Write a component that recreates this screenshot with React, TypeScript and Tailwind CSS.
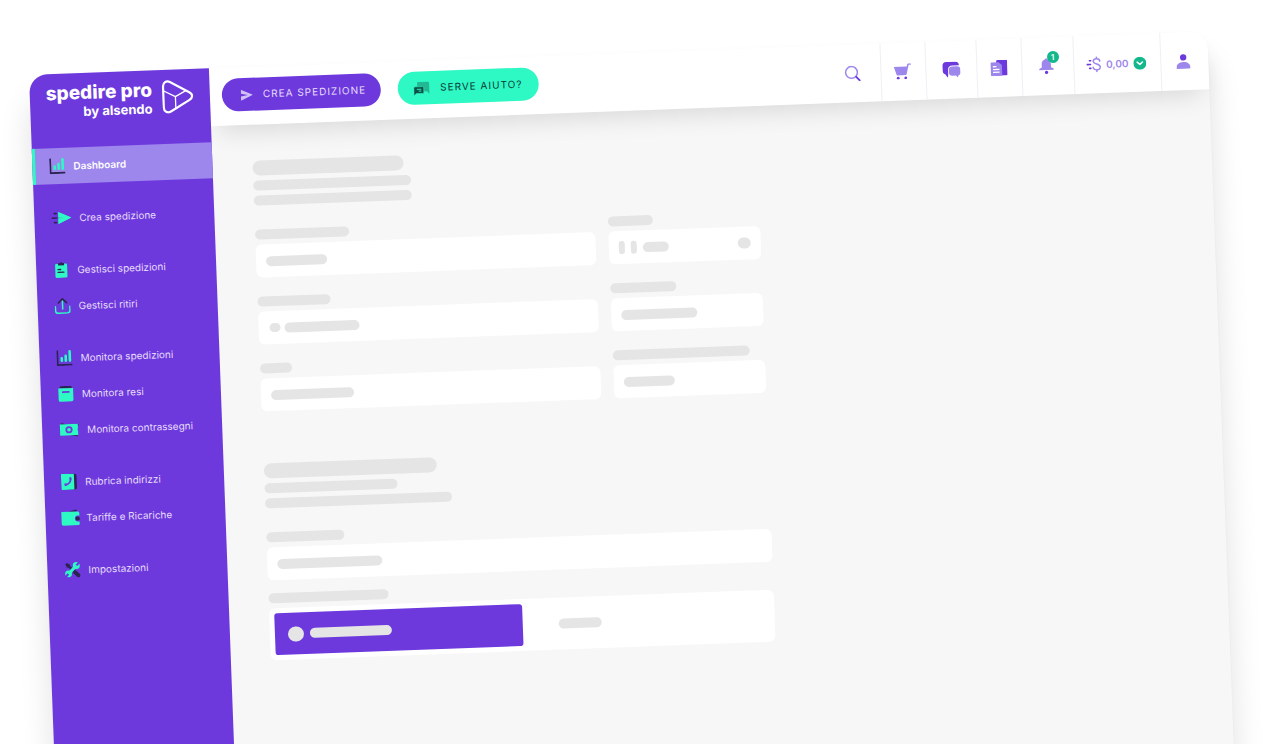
import type { ReactNode } from 'react';
import clsx from 'clsx';

const TEAL = '#2ef8c4';
const DARK = '#2b2350';
const PURPLE = '#6d39dd';
const LILAC = '#9d86ec';

function ChartIcon() {
  return (
    <svg width="16" height="16" viewBox="0 0 16 16" fill="none">
      <path d="M.9.3V15h14.800" stroke={DARK} strokeWidth="1.800" />
      <path d="M5.200 8.400v2.400M9.200 6v4.800M13.300 1.500v9.300" stroke={TEAL} strokeWidth="2.600" strokeLinecap="round" />
    </svg>
  );
}

function SendIcon() {
  return (
    <svg width="20" height="14" viewBox="0 0 20 14">
      <path d="M7 1l13 6-13 6V8.2L13 7 7 5.8z" fill={TEAL} />
      <path d="M7 1l13 6-13 6z" fill={TEAL} opacity=".85" />
      <path d="M3 2.5h2M.8 7h4.500M3 11.5h2" stroke={DARK} strokeWidth="1.6" strokeLinecap="round" />
    </svg>
  );
}

function ClipboardIcon() {
  return (
    <svg width="16" height="16" viewBox="0 0 16 16">
      <rect x="2" y="1.8" width="12" height="14" rx="1.2" fill={TEAL} />
      <path d="M5 1.2h1.6a1.5 1.5 0 012.8 0H11v2.3H5z" fill={DARK} />
      <path d="M4.800 7.600h2.600M4.800 10.300h5.800" stroke={DARK} strokeWidth="1.4" strokeLinecap="round" />
    </svg>
  );
}

function UploadIcon() {
  return (
    <svg width="16" height="16" viewBox="0 0 16 16" fill="none" strokeLinecap="round" strokeLinejoin="round">
      <path d="M.8 8.5v4.200A2.500 2.500 0 003.300 15.200h9.400a2.500 2.500 0 002.500-2.500V8.500" stroke={TEAL} strokeWidth="1.5" />
      <path d="M8 3v8" stroke={TEAL} strokeWidth="1.5" />
      <path d="M3.900 4.900L8 .9l4.100 4" stroke={DARK} strokeWidth="1.6" />
    </svg>
  );
}

function BoxIcon() {
  return (
    <svg width="16" height="16" viewBox="0 0 16 16">
      <path d="M2.600.2h10.800l1 2H1.600z" fill={DARK} />
      <path d="M.6 2.400h14.800v11.400c0 1.200-.8 2-2 2H2.600c-1.200 0-2-.8-2-2z" fill={TEAL} />
      <path d="M5 6.200h6" stroke={PURPLE} strokeWidth="1.8" strokeLinecap="round" />
    </svg>
  );
}

function CashIcon() {
  return (
    <svg width="20" height="14" viewBox="0 0 20 14">
      <path d="M2 0l7 2H1.600zM16.500.8l3.100 1-.9 3zM9 12h9.600l-.6 2z" fill={DARK} />
      <rect x=".8" y="1.400" width="18" height="11.200" fill={TEAL} />
      <circle cx="9.800" cy="7" r="2.700" fill="none" stroke={PURPLE} strokeWidth="1.800" />
      <path d="M.8 5.400a3 3 0 000 3.200zM18.800 5.400a3 3 0 000 3.200z" fill={PURPLE} />
    </svg>
  );
}

function PhoneBookIcon() {
  return (
    <svg width="16" height="16" viewBox="0 0 16 16">
      <rect x="6" y="0" width="9.600" height="16" rx="2" fill={DARK} />
      <rect x="0" y="0" width="13" height="16" rx="1" fill={TEAL} />
      <path d="M9.400 4.800c.6 3-1.800 6-5.600 6.200" fill="none" stroke={PURPLE} strokeWidth="1.700" />
      <path d="M8.200 3.800l2-.4.4 2.600-1.800.4zM3 9.900l2.300-.6.6 2-2.300.9z" fill={PURPLE} />
    </svg>
  );
}

function WalletIcon() {
  return (
    <svg width="16" height="16" viewBox="0 0 16 16" className="overflow-visible">
      <path d="M6.500 1.600L14 0l1 2H6.500z" fill={DARK} />
      <path d="M-.5 2h15.800c.9 0 1.700.7 1.700 1.600V6h-1.600a3 3 0 000 6H17v2.200c0 .8-.6 1.400-1.400 1.400H.8C-.2 15.600-1 15-1 14V2.500c0-.3.200-.5.5-.5z" fill={TEAL} />
      <circle cx="15.200" cy="9" r="2.100" fill={DARK} />
    </svg>
  );
}

function ToolsIcon() {
  return (
    <svg width="16" height="16" viewBox="0 0 16 16" fill="none">
      <path d="M1 2.600L2.600 1l3 1.600.3 1.700 3.500 3.500-1.600 1.600-3.500-3.500-1.700-.3z" fill={DARK} />
      <path d="M10.500 10.500l3.300 3.300" stroke={DARK} strokeWidth="4" strokeLinecap="round" />
      <path d="M4 12l7.600-7.600" stroke={TEAL} strokeWidth="3" />
      <circle cx="12" cy="4" r="3.500" fill={TEAL} />
      <circle cx="4" cy="12" r="3.400" fill={TEAL} />
      <path d="M12.200 3.800L15.600.4M3.800 12.200L.4 15.600" stroke={PURPLE} strokeWidth="2.200" />
    </svg>
  );
}

function LogoMark() {
  return (
    <svg width="32" height="34" viewBox="0 0 32 34" fill="none" stroke="#fff" strokeLinejoin="round" strokeLinecap="round">
      <path
        d="M1.500 6.500v21c0 4 3.600 6.200 7 4.300l19-11c3.600-2.100 3.600-5.500 0-7.600l-19-11C5.100.3 1.500 2.500 1.500 6.500z"
        strokeWidth="2.200"
      />
      <path d="M2 11l11.500 6L24 11.500M13.500 17v12" strokeWidth="1.300" />
    </svg>
  );
}

function DartIcon() {
  return (
    <svg width="12" height="12" viewBox="0 0 12 12">
      <path d="M0 .5L12 6 0 11.500V7.300L7 6 0 4.700z" fill="#cfc0f7" />
    </svg>
  );
}

function HelpChatIcon() {
  return (
    <svg width="16" height="14" viewBox="0 0 16 14">
      <path d="M4.500.5h10a1 1 0 011 1v11L13 10H4.500a1 1 0 01-1-1V1.500a1 1 0 011-1z" fill="#23b894" />
      <path d="M1.200 5.200h7.600A1.200 1.200 0 0110 6.400v4.400A1.200 1.200 0 018.800 12H2.500L0 14V6.400a1.200 1.200 0 011.200-1.200z" fill="#104e47" stroke={TEAL} strokeWidth=".6" />
      <path d="M3 7.800h4.500M4.800 9.600h2.700" stroke={TEAL} strokeWidth=".9" />
    </svg>
  );
}

function SearchIcon() {
  return (
    <svg width="16" height="16" viewBox="0 0 16 16" fill="none" strokeLinecap="round">
      <circle cx="7" cy="7" r="5.900" stroke={LILAC} strokeWidth="1.500" />
      <path d="M11.600 11.600l3.400 3.600" stroke={PURPLE} strokeWidth="1.900" />
    </svg>
  );
}

function CartIcon() {
  return (
    <svg width="18" height="16" viewBox="0 0 18 16">
      <path d="M.5 3.200h12.900L14 .9C14.200.3 14.500 0 15 0h2.600v1.500h-2.200L13 10.900c-.1.500-.5.800-1 .8H4c-.5 0-.9-.3-1-.8z" fill={LILAC} />
      <circle cx="4.500" cy="14.500" r="1.400" fill={PURPLE} />
      <circle cx="12" cy="14.500" r="1.400" fill={PURPLE} />
    </svg>
  );
}

function ChatIcon() {
  return (
    <svg width="18" height="16" viewBox="0 0 18 16">
      <path d="M4 0h8.500C15 0 16.600 1.200 16.600 3.800H10C7.200 3.800 5.600 5.200 5.600 8v4.800L5.200 16l-2.400-3.400C1 11.800 0 10.400 0 8.500V4C0 1.500 1.500 0 4 0z" fill={PURPLE} />
      <path d="M9.600 4.800h5C16.600 4.800 18 6 18 8v2.800c0 1.700-.9 2.800-2.300 3.100L15.300 16l-2-2H9.600c-2 0-3.200-1.200-3.200-3V8c0-2 1.200-3.200 3.200-3.200z" fill={LILAC} />
    </svg>
  );
}

function NewsIcon() {
  return (
    <svg width="17" height="16" viewBox="0 0 17 16">
      <rect x="6" y="0" width="11" height="15.600" rx="1.200" fill={PURPLE} />
      <path d="M1.400 2.200h6.800l3.400 3V14.800c0 .7-.5 1.200-1.200 1.200h-9C.7 16 .2 15.500.2 14.800V3.400c0-.7.5-1.200 1.200-1.200z" fill={LILAC} />
      <path d="M3 6.600h2.600M3 9.400h5.600M3 12.200h5.600" stroke="#fff" strokeWidth="1.300" strokeLinecap="round" />
    </svg>
  );
}

function BellIcon() {
  return (
    <svg width="16" height="16" viewBox="0 0 16 16">
      <path d="M8 0c.8 0 1.400.6 1.400 1.300 2.100.6 3.200 2.400 3.200 4.500v3.400l2.600 1.300v1.300H.8v-1.300l2.600-1.300V5.800c0-2.100 1.100-3.900 3.200-4.500C6.600.6 7.200 0 8 0z" fill={LILAC} />
      <circle cx="8" cy="14.200" r="1.700" fill={PURPLE} />
    </svg>
  );
}

function DollarIcon() {
  return (
    <svg width="15" height="16" viewBox="0 0 15 16" fill="none" strokeLinecap="round">
      <path d="M13.500 5c0-1.700-1.300-2.600-3.200-2.600S7 3.400 7 4.900c0 3.700 6.800 1.900 6.800 5.800 0 1.700-1.500 2.800-3.500 2.800s-3.600-1-3.600-2.800M10.300.7v1.700M10.300 13.500v1.800" stroke={LILAC} strokeWidth="1.500" />
      <path d="M3.200 4.200h1.200M.8 8h3.400M3.200 11.800h1.200" stroke={PURPLE} strokeWidth="1.600" />
    </svg>
  );
}

function CheckCircleIcon() {
  return (
    <svg width="13" height="13" viewBox="0 0 12 12">
      <circle cx="6" cy="6" r="6" fill="#12b88c" />
      <path d="M3.600 5L6 7.200 8.400 5" fill="none" stroke="#fff" strokeWidth="1.500" strokeLinecap="round" strokeLinejoin="round" />
    </svg>
  );
}

function UserIcon() {
  return (
    <svg width="14" height="15" viewBox="0 0 14 15">
      <circle cx="7" cy="3.300" r="3.200" fill={PURPLE} />
      <path d="M0 14.600v-1.200C0 10.200 3 8 7 8s7 2.200 7 5.400v1.200z" fill={LILAC} />
    </svg>
  );
}

type NavItem = { label: string; icon: ReactNode; active?: boolean };

const navGroups: NavItem[][] = [
  [{ label: 'Dashboard', icon: <ChartIcon />, active: true }],
  [{ label: 'Crea spedizione', icon: <SendIcon /> }],
  [
    { label: 'Gestisci spedizioni', icon: <ClipboardIcon /> },
    { label: 'Gestisci ritiri', icon: <UploadIcon /> },
  ],
  [
    { label: 'Monitora spedizioni', icon: <ChartIcon /> },
    { label: 'Monitora resi', icon: <BoxIcon /> },
    { label: 'Monitora contrassegni', icon: <CashIcon /> },
  ],
  [
    { label: 'Rubrica indirizzi', icon: <PhoneBookIcon /> },
    { label: 'Tariffe e Ricariche', icon: <WalletIcon /> },
  ],
  [{ label: 'Impostazioni', icon: <ToolsIcon /> }],
];

function Sidebar() {
  return (
    <aside className="relative z-20 w-[180px] shrink-0 rounded-tl-[18px] bg-[#6d39dd]">
      <div className="flex h-[74px] items-start gap-[10px] pl-4 pt-[10px] text-white">
        <p className="text-right text-[19px] font-extrabold leading-5">
          spedire pro
          <span className="block text-[13px] font-bold leading-4">by alsendo</span>
        </p>
        <LogoMark />
      </div>
      <nav className="flex flex-col gap-4">
        {navGroups.map((group) => (
          <ul key={group[0].label}>
            {group.map((item) => (
              <li key={item.label}>
                <a
                  href="#"
                  className={clsx(
                    'flex h-9 items-center gap-2 border-l-[3px] pl-[14px] text-[10px]',
                    item.active
                      ? 'border-[#2ef8c4] bg-[#9d86ec] font-semibold text-white'
                      : 'border-transparent text-[#e6dcfb]'
                  )}
                >
                  {item.icon}
                  {item.label}
                </a>
              </li>
            ))}
          </ul>
        ))}
      </nav>
    </aside>
  );
}

function HeaderButton({ label, className, children }: { label: string; className: string; children: ReactNode }) {
  return (
    <button aria-label={label} className={clsx('flex h-full items-center justify-center border-l border-[#f0eff5]', className)}>
      {children}
    </button>
  );
}

function Header() {
  return (
    <header className="relative z-10 flex h-[58px] items-center rounded-tr-[18px] bg-white pl-3 shadow-[0_14px_24px_-8px_rgba(0,0,0,0.12)]">
      <div className="flex gap-[17px] pb-[3px]">
        <button className="flex h-[33px] items-center gap-[10px] rounded-full bg-[#6d39dd] pl-[19px] pr-[15px] text-[10px] tracking-[1px] text-[#e6dcfb]">
          <DartIcon />
          CREA SPEDIZIONE
        </button>
        <button className="flex h-[33px] items-center gap-[10px] rounded-full bg-[#2ef8c4] px-4 text-[10px] tracking-[1px] text-[#0d3b36]">
          <HelpChatIcon />
          SERVE AIUTO?
        </button>
      </div>

      <div className="ml-auto flex h-full">
        <button aria-label="Cerca" className="flex w-14 items-center justify-center">
          <SearchIcon />
        </button>
        <HeaderButton label="Carrello" className="w-[45px] pr-[2px]">
          <CartIcon />
        </HeaderButton>
        <HeaderButton label="Messaggi" className="w-[51px]">
          <ChatIcon />
        </HeaderButton>
        <HeaderButton label="Novità" className="w-[45px] pr-[2px]">
          <NewsIcon />
        </HeaderButton>
        <HeaderButton label="Notifiche" className="w-[52px] pr-1">
          <span className="relative">
            <BellIcon />
            <span className="absolute -right-[5px] -top-[7px] flex size-3 items-center justify-center rounded-full bg-[#12b88c] text-[8px] font-semibold text-white">
              1
            </span>
          </span>
        </HeaderButton>
        <HeaderButton label="Credito" className="w-[87px] gap-[5px] pr-[2px]">
          <DollarIcon />
          <span className="text-[10px] font-semibold text-[#9d86ec]">0,00</span>
          <CheckCircleIcon />
        </HeaderButton>
        <HeaderButton label="Profilo" className="w-12 pr-1">
          <UserIcon />
        </HeaderButton>
      </div>
    </header>
  );
}

function Bar({ className }: { className: string }) {
  return <div className={clsx('rounded-full bg-[#e5e5e5]', className)} />;
}

function Field({ label, children }: { label: string; children: ReactNode }) {
  return (
    <div>
      <Bar className={clsx('h-[10px]', label)} />
      <div className="mt-[5px] flex h-[33px] items-center rounded-md bg-white px-[10px]">{children}</div>
    </div>
  );
}

function Content() {
  return (
    <main className="pl-10 pt-9" aria-hidden="true">
      <section className="max-w-[505px]">
        <div className="space-y-[5px]">
          <Bar className="h-[15px] w-[151px]" />
          <Bar className="h-[10px] w-[158px]" />
          <Bar className="h-[10px] w-[158px]" />
        </div>
        <div className="mt-6 grid grid-cols-[1fr_152px] gap-x-[13px] gap-y-[19px]">
          <Field label="w-[94px]">
            <Bar className="h-[10px] w-[61px]" />
          </Field>
          <Field label="w-[45px]">
            <Bar className="h-[13px] w-[6px]" />
            <Bar className="ml-[6px] h-[13px] w-[6px]" />
            <Bar className="ml-[6px] h-[10px] w-[26px]" />
            <Bar className="ml-auto h-[11px] w-[13px]" />
          </Field>
          <Field label="w-[73px]">
            <Bar className="ml-px h-[9px] w-[11px]" />
            <Bar className="ml-1 h-[10px] w-[75px]" />
          </Field>
          <Field label="w-[66px]">
            <Bar className="h-[10px] w-[76px]" />
          </Field>
          <Field label="w-[32px]">
            <Bar className="h-[10px] w-[83px]" />
          </Field>
          <Field label="w-[137px]">
            <Bar className="h-[10px] w-[51px]" />
          </Field>
        </div>
      </section>

      <section className="mt-[52px] max-w-[505px]">
        <div className="space-y-[5px]">
          <Bar className="h-[15px] w-[173px]" />
          <Bar className="h-[10px] w-[133px]" />
          <Bar className="h-[10px] w-[187px]" />
        </div>
        <div className="mt-6">
          <Field label="w-[78px]">
            <Bar className="h-[10px] w-[105px]" />
          </Field>
        </div>
        <Bar className="mt-[13px] h-[10px] w-[120px]" />
        <div className="mt-[5px] flex h-[52px] items-center rounded-md bg-white p-[5px]">
          <div className="flex h-full w-1/2 items-center gap-[6px] rounded-[3px] bg-[#6d39dd] pl-[13px]">
            <Bar className="h-[15px] w-4" />
            <Bar className="h-[10px] w-[82px]" />
          </div>
          <Bar className="ml-9 h-[10px] w-[43px]" />
        </div>
      </section>
    </main>
  );
}

export default function App() {
  return (
    <div className="h-screen overflow-hidden bg-white pl-[29px] pr-[60px] pt-[75px] font-['Inter',sans-serif]">
      <div className="flex min-h-screen origin-top-left rotate-[-2.13deg] rounded-t-[18px] bg-[#f7f7f7] shadow-[0_26px_32px_rgba(0,0,0,0.12),0_2px_2px_rgba(0,0,0,0.04)]">
        <Sidebar />
        <div className="min-w-0 flex-1">
          <Header />
          <Content />
        </div>
      </div>
    </div>
  );
}
